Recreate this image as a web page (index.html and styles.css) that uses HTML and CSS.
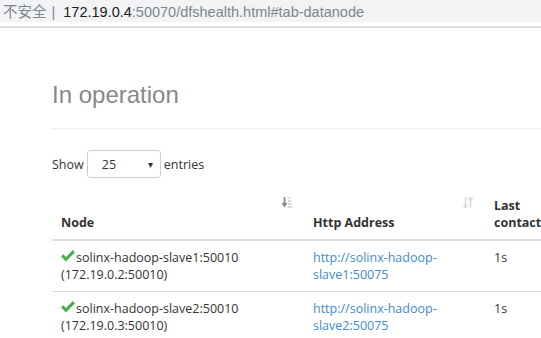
FILE: index.html
```html
<!DOCTYPE html>
<html lang="en">
<head>
  <meta charset="UTF-8">
  <title>Datanode Information</title>
  <link rel="stylesheet" href="styles.css">
</head>
<body>
  <!-- address bar -->
  <div class="addr">
    <span class="insecure">不安全</span><span class="sep">|</span><span class="host">172.19.0.4</span><span class="path">:50070/dfshealth.html#tab-datanode</span>
  </div>

  <div class="page">
    <h3 class="title">In operation</h3>
    <hr>

    <div class="length">
      Show
      <span class="select"><span>25</span><span class="caret">&#9662;</span></span>
      entries
    </div>

    <!-- datanode table -->
    <table class="nodes">
      <thead>
        <tr>
          <th class="col-node">Node
            <svg class="sort" width="10" height="11" viewBox="0 0 10 11"><path d="M2.5 0v8M0.5 6l2 3 2-3" stroke="#888" stroke-width="1.6" fill="none"/><path d="M6 1h2M6 4h3M6 7h4M6 10h4" stroke="#bbb" stroke-width="1.2"/></svg>
          </th>
          <th class="col-http">Http Address
            <svg class="sort" width="10" height="11" viewBox="0 0 10 11"><path d="M2.5 0v10M0.5 8l2 3 2-3M7.5 11v-10M5.5 3l2-3 2 3" stroke="#ddd" stroke-width="1.6" fill="none"/></svg>
          </th>
          <th class="col-last">Last contact</th>
        </tr>
      </thead>
      <tbody>
        <tr>
          <td><svg class="ok" width="14" height="12" viewBox="0 0 14 12"><path d="M0 6.5l2.2-2.2 2.8 2.8 6.8-7 2.2 2.2-9 9.2z" fill="#4cae4c"/></svg>solinx-hadoop-slave1:50010<br>(172.19.0.2:50010)</td>
          <td><a href="#">http://solinx-hadoop-slave1:50075</a></td>
          <td>1s</td>
        </tr>
        <tr>
          <td><svg class="ok" width="14" height="12" viewBox="0 0 14 12"><path d="M0 6.5l2.2-2.2 2.8 2.8 6.8-7 2.2 2.2-9 9.2z" fill="#4cae4c"/></svg>solinx-hadoop-slave2:50010<br>(172.19.0.3:50010)</td>
          <td><a href="#">http://solinx-hadoop-slave2:50075</a></td>
          <td>1s</td>
        </tr>
      </tbody>
    </table>
  </div>
</body>
</html>
```

FILE: styles.css
```css
/* page base */
body {
  margin: 0;
  overflow: hidden;
  font-family: "Open Sans", "Noto Sans", sans-serif;
  font-size: 12px;
  color: #333;
  background: #fff;
}
/* address bar */
.addr {
  height: 28px;
  line-height: 24px;
  box-sizing: border-box;
  background: #f1f3f4;
  padding-left: 3px;
  font-family: "Liberation Sans", "Noto Sans CJK SC", sans-serif;
  font-size: 14.5px;
  color: #80868b;
  white-space: nowrap;
  border-bottom: 2px solid #dadce0;
  box-shadow: inset 0 -4px 0 #fff;
}
.addr .sep {
  margin: 0 8px 0 5px;
}
.addr .host {
  color: #202124;
}
/* content */
.page {
  padding-left: 52px;
}
.title {
  margin: 52px 0 0;
  font-family: "Liberation Sans", Arial, sans-serif;
  font-size: 24px;
  font-weight: normal;
  color: #888;
  line-height: 29px;
}
hr {
  margin: 19px 0 0;
  border: 0;
  border-top: 1px solid #eee;
}
.length {
  margin-top: 21px;
  display: flex;
  align-items: center;
  gap: 3px;
  font-size: 12.5px;
}
.select {
  display: inline-flex;
  justify-content: space-between;
  align-items: center;
  width: 74px;
  height: 28px;
  box-sizing: border-box;
  border: 1px solid #ccc;
  border-radius: 3px;
  padding: 0 7px 0 14px;
}
.caret {
  font-size: 10px;
  color: #333;
}
/* table */
.nodes {
  margin-top: 11px;
  border-collapse: collapse;
  table-layout: fixed;
  width: 500px;
  line-height: 17px;
  font-size: 12.5px;
}
.nodes th {
  position: relative;
  text-align: left;
  vertical-align: bottom;
  padding: 8px 8px 8px 9px;
  border-bottom: 2px solid #ddd;
  font-weight: bold;
}
.nodes td {
  vertical-align: top;
  padding: 8px 8px 8px 9px;
  border-top: 1px solid #ddd;
}
.col-node {
  width: 235px;
}
.col-http {
  width: 164px;
}
.col-last {
  width: 50px;
}
.sort {
  position: absolute;
  top: 8px;
  right: 12px;
}
.ok {
  margin-right: 1px;
}
a {
  color: #428bca;
  text-decoration: none;
}
```
